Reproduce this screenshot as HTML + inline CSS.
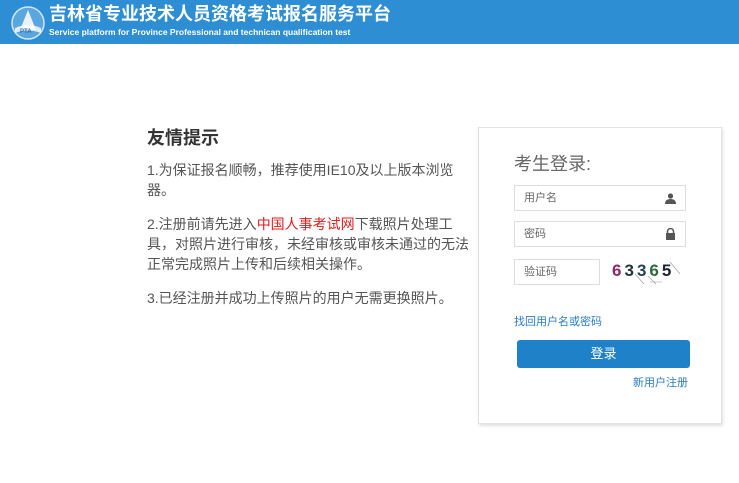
<!DOCTYPE html>
<html><head><meta charset="utf-8"><style>
*{margin:0;padding:0;box-sizing:border-box}
body{width:739px;height:483px;background:#fff;font-family:"Liberation Sans","Noto Sans CJK SC",sans-serif;position:relative;overflow:hidden}
.hd{position:absolute;left:0;top:0;width:739px;height:44px;background:#2e8ed4}
.t1{position:absolute;left:49px;top:2px;color:#fff;font-size:18px;font-weight:bold;white-space:nowrap;line-height:24px}
.t2{position:absolute;left:49px;top:27px;color:#fff;font-size:8.5px;font-weight:bold;white-space:nowrap}
.tip{position:absolute;left:147px;top:126px;width:340px;color:#555;font-size:14px;line-height:20px;white-space:nowrap}
.tip h3{font-size:18px;font-weight:bold;color:#333;margin-bottom:10px;line-height:24px}
.tip p{margin-bottom:14px}
.red{color:#e02020}
.box{position:absolute;left:478px;top:127px;width:244px;height:297px;border:1px solid #e2e2e2;box-shadow:1px 2px 3px rgba(0,0,0,.12)}
.ttl{position:absolute;left:514px;top:150px;font-size:18px;color:#666}
.in{position:absolute;border:1px solid #ddd;font-size:11px;color:#666;padding-left:9px;line-height:24px}
.lk{position:absolute;color:#2a7bc4;font-size:11px}
.btn{position:absolute;left:517px;top:340px;width:173px;height:28px;background:#1f82c8;border-radius:3px;color:#fff;font-size:13px;text-align:center;line-height:28px}
</style></head><body>
<div class="hd">
<svg style="position:absolute;left:11px;top:6px" width="34" height="34" viewBox="0 0 34 34"><circle cx="17" cy="17" r="16" fill="#5aa6de" stroke="#cfe6f7" stroke-width="1.5"/><path d="M17 4 L9 24 L25 24 Z" fill="#e8f3fb"/><path d="M4 22 Q17 16 30 22 L30 27 Q17 22 4 27Z" fill="#fff" opacity=".8"/><text x="9" y="27" font-size="6" fill="#2e6fa8" font-weight="bold" font-family="Liberation Sans">PTA</text></svg>
<div class="t1">吉林省专业技术人员资格考试报名服务平台</div>
<div class="t2">Service platform for Province Professional and technican qualification test</div>
</div>
<div class="tip">
<h3>友情提示</h3>
<p>1.为保证报名顺畅，推荐使用IE10及以上版本浏览<br>器。</p>
<p>2.注册前请先进入<span class="red">中国人事考试网</span>下载照片处理工<br>具，对照片进行审核，未经审核或审核未通过的无法<br>正常完成照片上传和后续相关操作。</p>
<p>3.已经注册并成功上传照片的用户无需更换照片。</p>
</div>
<div class="box"></div>
<div class="ttl">考生登录:</div>
<div class="in" style="left:514px;top:185px;width:172px;height:26px">用户名<svg style="position:absolute;right:9px;top:7px" width="11" height="11" viewBox="0 0 11 11"><circle cx="5.5" cy="3" r="2.6" fill="#555"/><path d="M0 11 Q0 6 5.5 6 Q11 6 11 11Z" fill="#555"/></svg></div>
<div class="in" style="left:514px;top:221px;width:172px;height:26px">密码<svg style="position:absolute;right:9px;top:6px" width="11" height="12" viewBox="0 0 11 12"><path d="M2.5 5 V3.5 a3 3 0 0 1 6 0 V5" stroke="#555" stroke-width="1.5" fill="none"/><rect x="1" y="5" width="9" height="7" fill="#555"/></svg></div>
<div class="in" style="left:514px;top:259px;width:86px;height:26px">验证码</div>
<div style="position:absolute;left:612px;top:261px;font-size:17px;font-weight:bold;letter-spacing:3px;font-family:'Liberation Sans',sans-serif"><span style="color:#8a2a6a">6</span><span style="color:#233">3</span><span style="color:#245">3</span><span style="color:#2a6a3a">6</span><span style="color:#223">5</span></div>
<svg style="position:absolute;left:610px;top:258px" width="76" height="28"><path d="M25 16 L34 26 M38 18 L46 26 M60 4 L70 16 M40 24 L52 24" stroke="#999" stroke-width="0.6" fill="none"/></svg>
<div class="lk" style="left:514px;top:313px">找回用户名或密码</div>
<div class="btn">登录</div>
<div class="lk" style="left:633px;top:374px">新用户注册</div>
</body></html>
